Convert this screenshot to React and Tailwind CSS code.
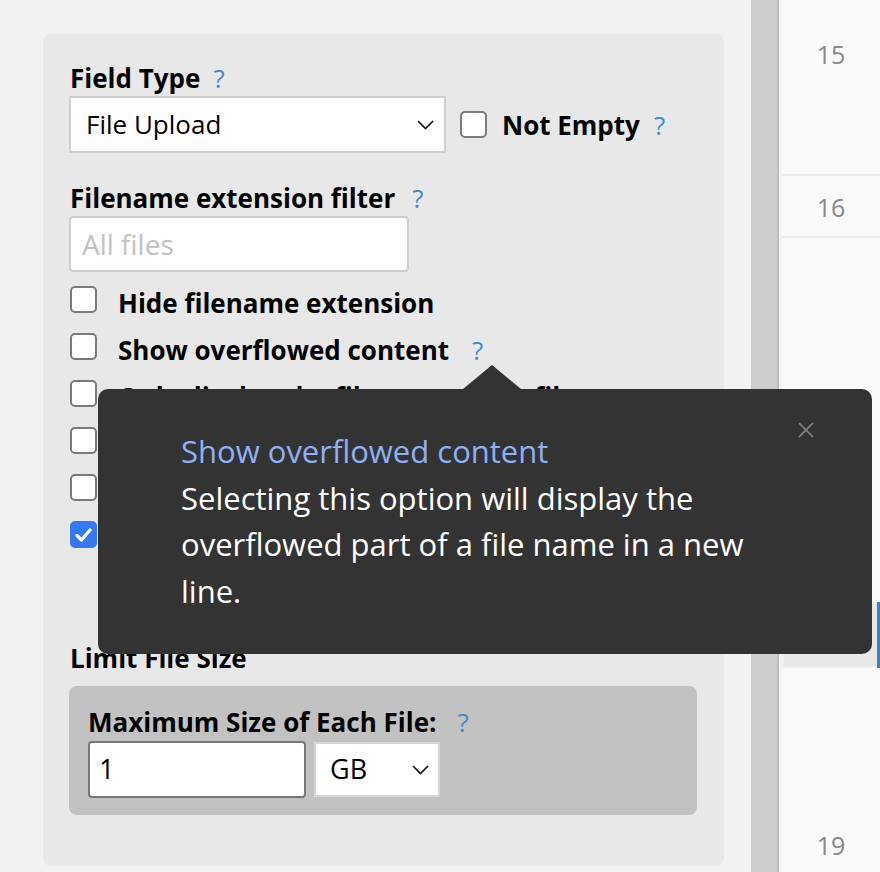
const Help = ({ className = '' }) => (
  <span className={`text-[26px] leading-[32px] text-[#3f8ad6] font-normal ${className}`}>?</span>
);

const Chevron = () => (
  <svg width="17" height="10" viewBox="0 0 17 10" fill="none" stroke="#111" strokeWidth="1.6">
    <polyline points="1,1 8.5,8.5 16,1" />
  </svg>
);

const Box = ({ checked }) =>
  checked ? (
    <span className="w-[27px] h-[27px] rounded-[5px] bg-[#3478f6] flex items-center justify-center shrink-0">
      <svg width="17" height="14" viewBox="0 0 17 14" fill="none" stroke="#fff" strokeWidth="3.2" strokeLinecap="round" strokeLinejoin="round">
        <polyline points="2,7.5 6.5,12 15,2" />
      </svg>
    </span>
  ) : (
    <span className="block w-[27px] h-[27px] rounded-[5px] border-2 border-[#7a7a7a] bg-white shrink-0" />
  );

const options = [
  { label: 'Hide filename extension' },
  { label: 'Show overflowed content', help: true },
  { label: 'Only display the file name, hide file', help: true },
  { label: 'Allow multiple files' },
  { label: 'Show file preview' },
  { label: 'Display upload progress', checked: true },
];

export default function App() {
  return (
    <div className="relative flex h-[872px] w-[880px] overflow-hidden bg-[#f2f2f2] font-['Open_Sans',sans-serif] text-black">
      {/* left editor area */}
      <div className="w-[751px] shrink-0 pt-[34px] pl-[43px]">
        <div className="w-[681px] h-[832px] rounded-lg bg-[#e8e8e8] px-[26px] pt-[28px]">
          <div className="flex items-center gap-[13px] font-bold text-[26px] leading-[32px] mb-[2px] pl-[1px]">
            <span>Field Type</span>
            <Help />
          </div>
          <div className="flex items-center">
            <div className="w-[377px] h-[57px] bg-white border-2 border-[#cfcfcf] flex items-center justify-between pl-[15px] pr-[10px]">
              <span className="text-[26px]">File Upload</span>
              <Chevron />
            </div>
            <span className="ml-[14px]">
              <Box />
            </span>
            <span className="ml-[15px] font-bold text-[26px] leading-[32px]">Not Empty</span>
            <Help className="ml-[14px]" />
          </div>

          <div className="flex items-center gap-[17px] font-bold text-[26px] leading-[32px] mt-[29px] mb-[2px] pl-[1px]">
            <span>Filename extension filter</span>
            <Help />
          </div>
          <div className="w-[340px] h-[56px] bg-white border-2 border-[#cfcfcf] rounded-[4px] flex items-center pl-[11px] text-[28px] text-[#c2c2c2]">
            All files
          </div>

          <div className="mt-[10px]">
            {options.map((o) => (
              <div key={o.label} className="flex h-[47px] items-start">
                <span className="mt-[4px] ml-[1px]">
                  <Box checked={o.checked} />
                </span>
                <span className="ml-[21px] mt-[5px] font-bold text-[26px] leading-[32px] whitespace-nowrap">{o.label}</span>
                {o.help && <Help className="ml-[23px] mt-[5px]" />}
              </div>
            ))}
          </div>

          <div className="mt-[78px] font-bold text-[26px] leading-[32px] pl-[1px]">Limit File Size</div>
          <div className="mt-[12px] w-[628px] rounded-lg bg-[#c2c2c2] pl-[19px] pt-[20px] pb-[17px]">
            <div className="flex items-center gap-[21px] font-bold text-[26px] leading-[32px]">
              <span>Maximum Size of Each File:</span>
              <Help />
            </div>
            <div className="flex items-center gap-[8px] mt-[3px]">
              <div className="w-[218px] h-[57px] bg-white border-2 border-[#777] rounded-[4px] flex items-center pl-[9px] text-[27px]">
                1
              </div>
              <div className="w-[126px] h-[55px] bg-white border-2 border-[#d6d6d6] flex items-center justify-between pl-[14px] pr-[9px] text-[27px]">
                <span>GB</span>
                <Chevron />
              </div>
            </div>
          </div>
        </div>
      </div>

      {/* scrollbar strip */}
      <div className="w-[26px] shrink-0 bg-[#cdcdcd]" />
      <div className="w-[2px] shrink-0 bg-[#bcbcbc]" />
      <div className="w-[3px] shrink-0 bg-[#f3f3f3]" />

      {/* right line-number column */}
      <div className="flex-1 bg-[#fafafa] flex flex-col text-[25px] text-[#888] text-center">
        <div className="h-[174px] pt-[38px] leading-[32px]">15</div>
        <div className="h-[2px] bg-[#ececec]" />
        <div className="h-[60px] flex items-center justify-center pt-[3px]">16</div>
        <div className="h-[2px] bg-[#ececec]" />
        <div className="h-[364px]" />
        <div className="h-[66px] flex">
          <div className="flex-1 bg-[#e8e8e8] border-l-2 border-t-2 border-b-2 border-[#f0f0f0]" />
          <div className="w-[3px] bg-[#3b82c4]" />
        </div>
        <div className="flex-1 flex items-end justify-center pb-[11px] leading-[32px]">19</div>
      </div>

      {/* tooltip */}
      <div className="absolute left-[98px] top-[389px] w-[774px] h-[265px] rounded-[10px] bg-[#333] pl-[83px] pt-[39px]">
        <div className="absolute left-[365px] top-[-24px] w-0 h-0 border-l-[29px] border-r-[29px] border-b-[24px] border-l-transparent border-r-transparent border-b-[#333]" />
        <svg className="absolute left-[700px] top-[33px]" width="16" height="16" viewBox="0 0 16 16" stroke="#8a8a8a" strokeWidth="1.6">
          <line x1="1" y1="1" x2="15" y2="15" />
          <line x1="15" y1="1" x2="1" y2="15" />
        </svg>
        <div className="w-[580px] text-[31px] leading-[46.5px]">
          <div className="text-[#8fb0f5]">Show overflowed content</div>
          <div className="text-white">Selecting this option will display the overflowed part of a file name in a new line.</div>
        </div>
      </div>
    </div>
  );
}
